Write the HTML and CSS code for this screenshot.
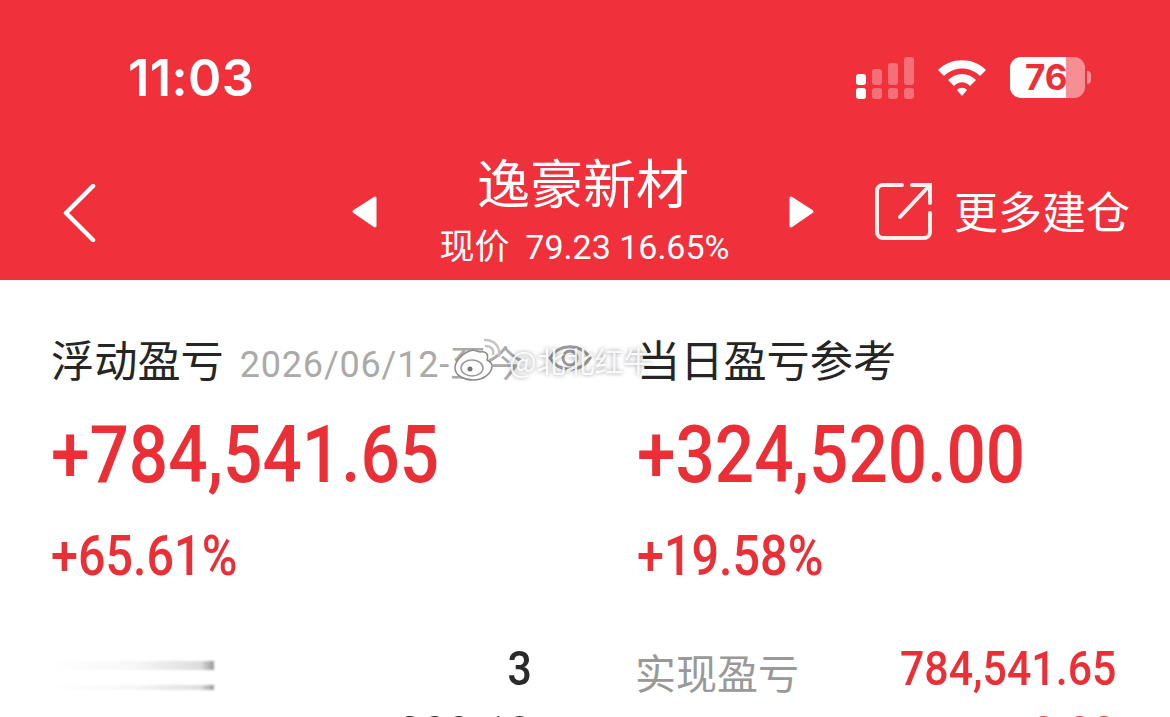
FILE: index.html
```html
<!DOCTYPE html>
<html lang="zh-CN">
<head>
<meta charset="utf-8">
<title>逸豪新材</title>
<link rel="stylesheet" href="styles.css">
</head>
<body>
<div class="page">
  <header class="header">
    <div class="status">
      <span class="time">11:03</span>
      <div class="status-icons">
        <svg class="signal" width="60" height="44" viewBox="0 0 60 44">
          <rect x="1" y="18" width="10" height="11" rx="3" fill="#fff"/>
          <rect x="1" y="32" width="10" height="11" rx="3" fill="#fff"/>
          <g fill="#fff" opacity=".3">
            <rect x="17" y="13" width="10" height="16" rx="3"/>
            <rect x="33" y="7" width="10" height="22" rx="3"/>
            <rect x="49" y="1" width="10" height="28" rx="3"/>
            <rect x="17" y="32" width="10" height="11" rx="3"/>
            <rect x="33" y="32" width="10" height="11" rx="3"/>
            <rect x="49" y="32" width="10" height="11" rx="3"/>
          </g>
        </svg>
        <svg class="wifi" width="50" height="38" viewBox="0 0 50 38">
          <path d="M1 11 C14 -2 36 -2 49 11 L43 17 C33 7 17 7 7 17 Z" fill="#fff"/>
          <path d="M11 21 C19 13 31 13 39 21 L33 27 C28 22 22 22 17 27 Z" fill="#fff"/>
          <path d="M20 31 C23 28 27 28 30 31 L25 37 Z" fill="#fff"/>
        </svg>
        <div class="battery">
          <div class="battery-body"><span class="battery-num">76</span></div>
          <span class="battery-cap"></span>
        </div>
      </div>
    </div>
    <nav class="nav">
      <svg class="back" width="34" height="58" viewBox="0 0 34 58">
        <path d="M31 2 L4 29 L31 56" fill="none" stroke="#fff" stroke-width="4.500" stroke-linecap="round" stroke-linejoin="round"/>
      </svg>
      <svg class="arrow-left" width="27" height="34" viewBox="0 0 27 34">
        <path d="M24 3 L3 16.500 L24 31 Z" fill="#fff" stroke="#fff" stroke-width="3" stroke-linejoin="round"/>
      </svg>
      <div class="title-block">
        <div class="title">逸豪新材</div>
        <div class="subtitle">现价 <span class="sub-num">79.23 16.65%</span></div>
      </div>
      <svg class="arrow-right" width="27" height="34" viewBox="0 0 27 34">
        <path d="M3 3 L24 16.500 L3 31 Z" fill="#fff" stroke="#fff" stroke-width="3" stroke-linejoin="round"/>
      </svg>
      <svg class="share" width="60" height="60" viewBox="0 0 60 60">
        <path d="M28 3 H9 A6 6 0 0 0 3 9 V50 A6 6 0 0 0 9 56 H50 A6 6 0 0 0 56 50 V31" fill="none" stroke="#fff" stroke-opacity=".92" stroke-width="4" stroke-linecap="round"/>
        <path d="M26 35 L55 4 M38 3 H56 V21" fill="none" stroke="#fff" stroke-opacity=".92" stroke-width="4" stroke-linecap="round"/>
      </svg>
      <span class="more">更多建仓</span>
    </nav>
  </header>

  <main class="content">
    <section class="col">
      <div class="label-row">
        <span class="label">浮动盈亏</span>
        <span class="date">2026/06/12-至今</span>
        <svg class="eye" width="44" height="34" viewBox="0 0 44 34">
          <path d="M2 17 C11 2 33 2 42 17 C33 32 11 32 2 17 Z" fill="none" stroke="#9a9a9a" stroke-width="3"/>
          <circle cx="22" cy="17" r="7" fill="none" stroke="#9a9a9a" stroke-width="3"/>
        </svg>
      </div>
      <div class="big">+784,541.65</div>
      <div class="pct">+65.61%</div>
    </section>
    <section class="col">
      <div class="label-row">
        <span class="label">当日盈亏参考</span>
      </div>
      <div class="big">+324,520.00</div>
      <div class="pct">+19.58%</div>
    </section>

    <div class="row row-top row-left">
      <div class="blurred"><span class="smear"></span><span class="smear smear-low"></span></div>
      <span class="val dark">3</span>
    </div>
    <div class="row row-top">
      <span class="key">实现盈亏</span>
      <span class="val red">784,541.65</span>
    </div>
    <div class="row row-left"><span></span><span class="val dark">300.10</span></div>
    <div class="row"><span></span><span class="val red">0.00</span></div>
  </main>

  <div class="watermark">
    <svg class="weibo" width="50" height="44" viewBox="0 0 50 44">
      <path d="M20 12 C10 14 2 23 2 30 C2 38 12 42 20 42 C31 42 39 35 39 28 C39 25 36 23 34 22 C36 16 33 13 27 14 Z" fill="#fff" stroke="#8a8a8a" stroke-width="1.500"/>
      <ellipse cx="19" cy="30" rx="11" ry="8" fill="none" stroke="#999" stroke-width="1.500"/>
      <circle cx="17" cy="31" r="2.500" fill="#777"/>
      <path d="M32 2 C41 2 48 9 46 18 M33 8 C38 8 41 11 40 16" fill="none" stroke="#c4c4c4" stroke-width="2.500" stroke-linecap="round"/>
    </svg>
    <span class="wm-text">@北北红牛</span>
  </div>
</div>
</body>
</html>
```
FILE: styles.css
```css
* { box-sizing: border-box; }
html, body { margin: 0; padding: 0; background: #fff; }
.page {
  position: relative;
  width: 1170px;
  height: 717px;
  overflow: hidden;
  font-family: "Noto Sans CJK SC", "Roboto", sans-serif;
}
.header {
  height: 280px;
  background: #f0313b;
  color: #fff;
  display: flex;
  flex-direction: column;
}
.status {
  height: 148px;
  display: flex;
  justify-content: space-between;
  align-items: flex-start;
  padding: 49px 79px 0 128px;
}
.time {
  font-family: "Inter", sans-serif;
  font-weight: 600;
  font-size: 50.500px;
  letter-spacing: .4px;
  line-height: 58px;
}
.status-icons {
  display: flex;
  align-items: flex-start;
  padding-top: 7px;
}
.wifi { margin: 3px 23px 0 22px; }
.battery { display: flex; align-items: center; gap: 2px; margin-top: 1px; }
.battery-body {
  width: 75px;
  height: 41px;
  border-radius: 11px;
  background: linear-gradient(to right, #fff 0, #fff 56px, rgba(255,255,255,.45) 56px);
  display: flex;
  align-items: center;
  padding-left: 15px;
}
.battery-num {
  font-family: "Inter", sans-serif;
  font-weight: 700;
  font-size: 35px;
  line-height: 41px;
  color: #ee2f3a;
}
.battery-cap {
  width: 4px;
  height: 13px;
  background: rgba(255,255,255,.45);
  border-radius: 0 5px 5px 0;
}
.nav {
  flex: 1;
  display: flex;
  align-items: flex-start;
  padding-left: 62px;
}
.back { margin-top: 36px; }
.arrow-left { margin: 47px 0 0 255px; }
.title-block {
  width: 410px;
  text-align: center;
}
.title {
  font-size: 53px;
  line-height: 70px;
  margin-top: -2px;
  font-weight: 400;
}
.subtitle {
  font-size: 35px;
  line-height: 44px;
  margin-top: 6px;
  padding-left: 3px;
  font-weight: 400;
  white-space: nowrap;
}
.sub-num {
  font-family: "Roboto", sans-serif;
  font-size: 34px;
  margin-left: 8px;
}
.arrow-right { margin: 47px 0 0 0; }
.share { margin: 34px 0 0 59px; }
.more {
  font-size: 44px;
  line-height: 60px;
  font-weight: 400;
  margin: 32px 0 0 20px;
  white-space: nowrap;
}
.content {
  display: grid;
  grid-template-columns: 586px 1fr;
  padding: 0 54px 0 51px;
}
.col { display: flex; flex-direction: column; }
.label-row {
  height: 60px;
  margin-top: 48px;
  display: flex;
  align-items: center;
}
.label {
  font-size: 43.200px;
  font-weight: 400;
  color: #252525;
  white-space: nowrap;
  line-height: 60px;
}
.date {
  font-family: "Roboto", "Noto Sans CJK SC", sans-serif;
  font-size: 36px;
  letter-spacing: .8px;
  color: #aaa;
  margin: 6px 0 0 16px;
  white-space: nowrap;
}
.eye { margin-left: 24px; }
.big {
  font-family: "Roboto", sans-serif;
  font-weight: 500;
  font-size: 79px;
  line-height: 90px;
  color: #ea2f37;
  margin-top: 22px;
  transform: scaleX(.877);
  transform-origin: left;
  white-space: nowrap;
}
.pct {
  font-family: "Roboto", sans-serif;
  font-weight: 500;
  font-size: 55px;
  line-height: 60px;
  color: #ea2f37;
  margin-top: 26px;
  transform: scaleX(.882);
  transform-origin: left;
}
.row {
  height: 65px;
  display: flex;
  justify-content: space-between;
  align-items: center;
}
.row-top { margin-top: 50px; }
.row-left { margin-right: 105px; }
.blurred {
  width: 163px;
  height: 65px;
  display: flex;
  flex-direction: column;
  gap: 15px;
  padding-top: 25px;
  filter: blur(1px);
}
.smear {
  display: block;
  height: 9px;
  background: linear-gradient(to right, #fff, #f7f7f7 50%, #ddd 92%, #999 100%);
}
.smear-low { height: 5px; }
.val {
  font-family: "Roboto", sans-serif;
  font-weight: 500;
  font-size: 49px;
  line-height: 65px;
  display: inline-block;
  transform: scaleX(.875);
  transform-origin: right;
}
.dark { color: #2a2a2a; }
.red { color: #ea2f37; }
.key {
  font-size: 41px;
  font-weight: 400;
  color: #999;
  line-height: 60px;
  margin-left: -2px;
  padding-top: 4px;
}
.watermark {
  position: absolute;
  left: 453px;
  top: 338px;
  display: flex;
  align-items: center;
}
.wm-text {
  font-size: 29px;
  font-weight: 400;
  color: rgba(255,255,255,.88);
  text-shadow: 0 0 4px rgba(0,0,0,.4);
  white-space: nowrap;
  margin-left: 6px;
}
```
